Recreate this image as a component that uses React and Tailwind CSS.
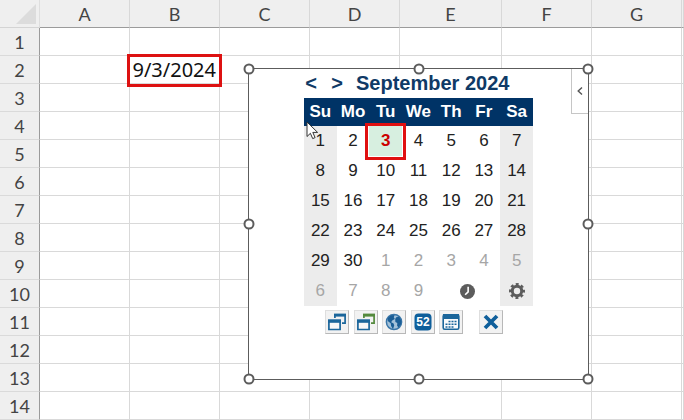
import React from "react";

const columns = ["A", "B", "C", "D", "E", "F", "G", ""];
const rows = [1, 2, 3, 4, 5, 6, 7, 8, 9, 10, 11, 12, 13, 14];
const cells = { B2: "9/3/2024" };

const weekdays = ["Su", "Mo", "Tu", "We", "Th", "Fr", "Sa"];
const weeks = [
  [1, 2, 3, 4, 5, 6, 7],
  [8, 9, 10, 11, 12, 13, 14],
  [15, 16, 17, 18, 19, 20, 21],
  [22, 23, 24, 25, 26, 27, 28],
  [29, 30, 1, 2, 3, 4, 5],
];

const handles = [
  "left-0 top-0",
  "left-1/2 top-0",
  "left-full top-0",
  "left-0 top-1/2",
  "left-full top-1/2",
  "left-0 top-full",
  "left-1/2 top-full",
  "left-full top-full",
];

/* ICONS */
const WindowsIcon = ({ back }) => (
  <svg width="18" height="18" viewBox="0 0 18 18">
    <path d="M6.9 5V1.9h10.2v8.3H14" fill="none" stroke={back} strokeWidth="1.7" />
    <path d="M6 .6h12v3H6z" fill={back} />
    <path d="M.9 7.5h11.2v9H.9z" fill="#f7f7f7" stroke="#1b669b" strokeWidth="1.7" />
    <path d="M0 6.4h13v3.4H0z" fill="#1b669b" />
  </svg>
);

const GlobeIcon = () => (
  <svg width="18" height="18" viewBox="0 0 18 18">
    <circle cx="9" cy="9" r="7.6" fill="#a3c1d9" stroke="#3a76a8" strokeWidth="1.5" />
    <path d="M2.8 5 6 2.2l3.6-.1-.8 2.2 1 1.6-2.6 1.6-1 1.8 2.4 1.2.6 2-1.2 3.8-1.9-3.2-.4-2.8L3 8.2z" fill="#1b5e96" />
    <path d="m11.2 4.2 3-.5 2.2 4.2-.3 3.4-2.6 3.2-1.4-1.7.2-2.9-1.9-1-.2-2.8z" fill="#1b5e96" />
  </svg>
);

const WeekIcon = () => (
  <svg width="18" height="18" viewBox="0 0 18 18">
    <rect x="0.5" y="0.5" width="17" height="17" rx="4" fill="#0f5f9b" />
    <text x="9" y="13" textAnchor="middle" fill="#fff" fontSize="12" fontWeight="bold" fontFamily="Liberation Sans, sans-serif">52</text>
  </svg>
);

const MonthIcon = () => (
  <svg width="18" height="18" viewBox="0 0 18 18">
    <rect x="1.2" y="1.7" width="15.6" height="14.6" rx="1.5" fill="#f8fafc" stroke="#1b669b" strokeWidth="1.6" />
    <path d="M1 1h16v5H1z" fill="#1b669b" />
    <path d="M6.5 8.5h8M3.5 11.2h11M3.5 13.9h8" stroke="#1b669b" strokeWidth="1.5" strokeDasharray="2 1" />
  </svg>
);

const CloseIcon = () => (
  <svg width="18" height="18" viewBox="0 0 18 18">
    <path d="M3 3 15 15M15 3 3 15" stroke="#0f5f9b" strokeWidth="3.8" />
  </svg>
);

const ClockIcon = () => (
  <svg width="15" height="15" viewBox="0 0 14 14">
    <circle cx="7" cy="7" r="7" fill="#5c5c5c" />
    <path d="M7.6 2.5v4.8L4.8 10" fill="none" stroke="#fff" strokeWidth="1.5" />
  </svg>
);

const GearIcon = () => (
  <svg width="16" height="16" viewBox="0 0 16 16" fill="none" stroke="#5c5c5c">
    <circle cx="8" cy="8" r="4.7" strokeWidth="3" />
    <circle cx="8" cy="8" r="6.7" strokeWidth="2.6" strokeDasharray="2.9 2.362" strokeDashoffset="1.45" />
  </svg>
);

const tools = [
  { label: "Copy window", icon: <WindowsIcon back="#1b669b" /> },
  { label: "Link window", icon: <WindowsIcon back="#548a3d" /> },
  { label: "Time zones", icon: <GlobeIcon /> },
  { label: "Week numbers", icon: <WeekIcon /> },
  { label: "Month view", icon: <MonthIcon /> },
];

const ToolButton = ({ label, children }) => (
  <button
    type="button"
    aria-label={label}
    className="flex h-6 w-6 items-center justify-center border border-[#dedede] border-r-[#b8b8b8] border-b-[#b8b8b8] bg-[#f2f2f2]"
  >
    {children}
  </button>
);

const Sheet = () => (
  <table className="w-full table-fixed border-separate border-spacing-0 bg-white font-['Lato',sans-serif]">
    <colgroup>
      <col className="w-10" />
      <col className="w-[90px]" />
      <col className="w-[90px]" />
      <col className="w-[90px]" />
      <col className="w-[90px]" />
      <col className="w-[102px]" />
      <col className="w-[90px]" />
      <col className="w-[90px]" />
      <col />
    </colgroup>
    <thead className="bg-[#efefef] text-lg leading-5 text-[#444]">
      <tr className="h-7">
        <th className="border-r border-b border-r-[#dedede] border-b-[#d4d4d4] p-0">
          <svg className="mr-[3px] ml-auto" width="20" height="20" viewBox="0 0 20 20">
            <path d="M20 0v20H0z" fill="#dcdcdc" />
          </svg>
        </th>
        {columns.map((name, i) => (
          <th key={i} className="border-r border-b border-r-[#d8d8d8] border-b-[#9b9b9b] p-0 font-normal">
            {name}
          </th>
        ))}
      </tr>
    </thead>
    <tbody>
      {rows.map((row) => (
        <tr key={row} className="h-7">
          <th className="border-r border-b border-r-[#9b9b9b] border-b-[#dadada] bg-[#efefef] p-0 text-lg leading-5 font-normal text-[#444]">
            {row}
          </th>
          {columns.map((name, i) => {
            const value = cells[name + row];
            return (
              <td key={i} className={`border-r border-b border-[#d9d9d9] p-0 pr-[3px] text-right font-['Noto_Sans',sans-serif] text-xl leading-5 text-[#111] ${value ? "relative z-10" : ""}`}>
                {value}
                {value && (
                  <span className="absolute -inset-x-[3px] -top-[2px] -bottom-1 border-3 border-[#dd1111]" />
                )}
              </td>
            );
          })}
        </tr>
      ))}
    </tbody>
  </table>
);

const DatePicker = () => (
  <div className="absolute top-[68px] left-[248px] z-20 h-[312px] w-[341px] border border-[#5c5c5c] bg-white font-['Liberation_Sans',sans-serif]">
    {/* COLLAPSE */}
    <button
      type="button"
      aria-label="Collapse"
      className="absolute top-0 right-0 flex h-[45px] w-[17px] items-center justify-center border-b border-l border-[#c6c6c6] bg-white"
    >
      <svg width="6" height="8" viewBox="0 0 6 8" fill="none" stroke="#555" strokeWidth="1.4">
        <path d="M5 .5 1.2 4 5 7.5" />
      </svg>
    </button>

    <div className="mx-auto w-[229px]">
      {/* MONTH */}
      <div className="flex h-[29px] items-start pt-px text-xl leading-[26px] font-bold text-[#0f3a66]">
        <button type="button" className="w-[14px]">&lt;</button>
        <button type="button" className="ml-3 w-[14px]">&gt;</button>
        <h2 className="ml-3">September 2024</h2>
      </div>

      {/* DAYS */}
      <table className="w-full table-fixed border-separate border-spacing-0 text-center text-[17px] leading-5 text-[#222]">
        <thead className="bg-[#003366] text-white">
          <tr className="h-7">
            {weekdays.map((day) => (
              <th key={day} className="p-0 font-bold">{day}</th>
            ))}
          </tr>
        </thead>
        <tbody>
          {weeks.map((week, w) => (
            <tr key={w} className="h-[30px]">
              {week.map((day, d) => {
                const selected = w === 0 && day === 3;
                const weekend = d === 0 || d === 6;
                const nextMonth = w === 4 && day < 8;
                return (
                  <td key={d} className={`p-0 ${weekend ? "bg-[#ececec]" : ""} ${selected ? "relative bg-[#d7efe0] font-bold text-[#cc0000]" : ""} ${nextMonth ? "text-[#a6a6a6]" : ""}`}>
                    <button type="button" className="w-full">{day}</button>
                    {selected && (
                      <span className="pointer-events-none absolute -inset-x-1 -top-[3px] -bottom-1 border-3 border-[#e01010]" />
                    )}
                  </td>
                );
              })}
            </tr>
          ))}
          <tr className="h-[30px] text-[#a6a6a6]">
            {[6, 7, 8, 9].map((day) => (
              <td key={day} className={`p-0 ${day === 6 ? "bg-[#ececec]" : ""}`}>
                <button type="button" className="w-full">{day}</button>
              </td>
            ))}
            <td colSpan={2} className="p-0">
              <button type="button" aria-label="Insert time" className="mx-auto block"><ClockIcon /></button>
            </td>
            <td className="bg-[#ececec] p-0">
              <button type="button" aria-label="Settings" className="mx-auto block"><GearIcon /></button>
            </td>
          </tr>
        </tbody>
      </table>

      {/* TOOLS */}
      <div className="mt-1 flex justify-between pr-[30px] pl-[21px]">
        <div className="flex w-[138px] justify-between">
          {tools.map((tool) => (
            <ToolButton key={tool.label} label={tool.label}>{tool.icon}</ToolButton>
          ))}
        </div>
        <ToolButton label="Close"><CloseIcon /></ToolButton>
      </div>
    </div>

    {/* RESIZE HANDLES */}
    {handles.map((place) => (
      <span key={place} className={`absolute h-[11px] w-[11px] -translate-1/2 rounded-full border-2 border-[#5c5c5c] bg-white ${place}`} />
    ))}

    {/* POINTER */}
    <svg className="absolute top-[52px] left-[57px]" width="13" height="19" viewBox="0 0 13 19">
      <path d="M1 1v14.5l3.4-3.2 2.3 5.3 2.4-1-2.3-5.2h4.8z" fill="#fff" stroke="#333" strokeWidth="1" />
    </svg>
  </div>
);

const App = () => {
  return (
    <main className="relative min-h-screen overflow-hidden bg-white">
      <Sheet />
      <DatePicker />
    </main>
  );
};

export default App;
